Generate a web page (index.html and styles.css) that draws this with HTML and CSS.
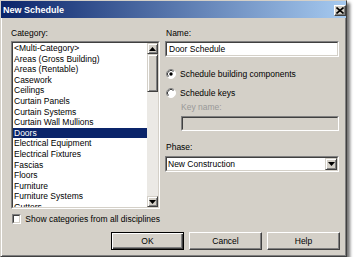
FILE: index.html
```html
<!DOCTYPE html>
<html>
<head>
<meta charset="utf-8">
<title>New Schedule</title>
<link rel="stylesheet" href="styles.css">
</head>
<body>
<div class="dialog">
  <div class="titlebar">
    <span class="title">New Schedule</span>
    <span class="close"><svg width="8" height="7" viewBox="0 0 8 7"><path d="M0.5,0.5 L7.5,6.5 M7.5,0.5 L0.5,6.5" stroke="#000" stroke-width="1.6" fill="none"/></svg></span>
  </div>
  <div class="body">
    <div class="col-left">
      <div class="label">Category:</div>
      <div class="sunken listbox">
        <div class="sunken-in listbox-in">
          <ul class="items">
            <li>&lt;Multi-Category&gt;</li>
            <li>Areas (Gross Building)</li>
            <li>Areas (Rentable)</li>
            <li>Casework</li>
            <li>Ceilings</li>
            <li>Curtain Panels</li>
            <li>Curtain Systems</li>
            <li>Curtain Wall Mullions</li>
            <li class="sel">Doors</li>
            <li>Electrical Equipment</li>
            <li>Electrical Fixtures</li>
            <li>Fascias</li>
            <li>Floors</li>
            <li>Furniture</li>
            <li>Furniture Systems</li>
            <li>Gutters</li>
            <li>Lighting Fixtures</li>
          </ul>
          <div class="scrollbar">
            <div class="raised sb-btn"><svg width="7" height="4" viewBox="0 0 7 4"><path d="M0,4 L3.5,0 L7,4 Z" fill="#000"/></svg></div>
            <div class="raised sb-thumb"></div>
            <div class="sb-track"></div>
            <div class="raised sb-btn"><svg width="7" height="4" viewBox="0 0 7 4"><path d="M0,0 L3.5,4 L7,0 Z" fill="#000"/></svg></div>
          </div>
        </div>
      </div>
      <div class="check-row">
        <span class="sunken checkbox"><span class="sunken-in checkbox-in"></span></span>
        <span>Show categories from all disciplines</span>
      </div>
    </div>
    <div class="col-right">
      <div class="label pad1">Name:</div>
      <div class="sunken textbox"><div class="sunken-in textbox-in">Door Schedule</div></div>
      <div class="radio-row row1">
        <svg class="radio" width="10" height="10" viewBox="0 0 10 10">
          <circle cx="5" cy="5" r="4.5" fill="#fff"/>
          <path d="M1.8,8.2 A4.5,4.5 0 0 1 8.2,1.8" stroke="#808080" fill="none"/>
          <path d="M8.2,1.8 A4.5,4.5 0 0 1 1.8,8.2" stroke="#ffffff" fill="none"/>
          <path d="M2.5,7.5 A3.5,3.5 0 0 1 7.5,2.5" stroke="#404040" fill="none"/>
          <circle cx="5" cy="5" r="1.7" fill="#000"/>
        </svg>
        <span>Schedule building components</span>
      </div>
      <div class="radio-row row2">
        <svg class="radio" width="10" height="10" viewBox="0 0 10 10">
          <circle cx="5" cy="5" r="4.5" fill="#fff"/>
          <path d="M1.8,8.2 A4.5,4.5 0 0 1 8.2,1.8" stroke="#808080" fill="none"/>
          <path d="M8.2,1.8 A4.5,4.5 0 0 1 1.8,8.2" stroke="#ffffff" fill="none"/>
          <path d="M2.5,7.5 A3.5,3.5 0 0 1 7.5,2.5" stroke="#404040" fill="none"/>
        </svg>
        <span>Schedule keys</span>
      </div>
      <div class="label disabled keylabel">Key name:</div>
      <div class="sunken keybox"><div class="sunken-in keybox-in"></div></div>
      <div class="label pad1 phaselabel">Phase:</div>
      <div class="sunken dropdown">
        <div class="sunken-in dropdown-in">
          <span class="dd-text">New Construction</span>
          <span class="raised dd-btn"><svg width="7" height="4" viewBox="0 0 7 4"><path d="M0,0 L3.5,4 L7,0 Z" fill="#000"/></svg></span>
        </div>
      </div>
    </div>
  </div>
  <div class="buttons">
    <div class="btn default">OK</div>
    <div class="btn">Cancel</div>
    <div class="btn">Help</div>
  </div>
</div>
</body>
</html>
```
FILE: styles.css
```css
* { box-sizing: border-box; }
html, body { margin: 0; padding: 0; background: #fff; }
body {
  font-family: "Liberation Sans", Arial, sans-serif;
  font-size: 8.5px;
  color: #000;
}
.dialog {
  width: 347px;
  height: 257px;
  background: #d4d0c8;
  border: 1px solid;
  border-color: #d4d0c8 #404040 #404040 #d4d0c8;
  box-shadow: inset 1px 1px #fff, inset -1px -1px #808080, 3px 3px 3px rgba(0,0,0,0.55);
  display: flex;
  flex-direction: column;
}
.titlebar {
  height: 17px;
  background: linear-gradient(to right, #0a246a, #a6caf0);
  display: flex;
  align-items: center;
  justify-content: space-between;
  padding: 0 0 0 2px;
  color: #fff;
  font-weight: bold;
  font-size: 9px;
}
.close {
  width: 12px;
  height: 11px;
  margin-top: 1px;
  background: #d4d0c8;
  border: 1px solid;
  border-color: #fff #404040 #404040 #fff;
  box-shadow: inset -1px -1px #808080;
  display: flex;
  align-items: center;
  justify-content: center;
}
.close svg { display: block; }

.sunken { border: 1px solid; border-color: #808080 #fff #fff #808080; }
.sunken-in { border: 1px solid; border-color: #404040 #d4d0c8 #d4d0c8 #404040; height: 100%; }
.raised {
  background: #d4d0c8;
  border: 1px solid;
  border-color: #d4d0c8 #404040 #404040 #d4d0c8;
  box-shadow: inset 1px 1px #fff, inset -1px -1px #808080;
}

.body {
  display: flex;
  gap: 5px;
  padding: 10px 0 0 10px;
}
.col-left { width: 149px; }
.col-right { width: 174px; }
.label { height: 11px; line-height: 11px; white-space: nowrap; }
.pad1 { padding-left: 1px; }

.listbox { margin-top: 2px; height: 168px; }
.listbox-in { display: flex; background: #fff; }
.items {
  flex: 1;
  list-style: none;
  margin: 0;
  padding: 0;
  overflow: hidden;
}
.items li {
  height: 10.6px;
  line-height: 10.6px;
  padding-left: 1px;
  white-space: nowrap;
}
.items li.sel { background: #0a246a; color: #fff; }
.scrollbar {
  width: 11px;
  display: flex;
  flex-direction: column;
}
.sb-btn {
  height: 11px;
  display: flex;
  align-items: center;
  justify-content: center;
}
.sb-btn svg { display: block; }
.sb-thumb { height: 38px; }
.sb-track { flex: 1; background: #ebe9e5; }

.check-row {
  margin-top: 4px;
  height: 12px;
  display: flex;
  align-items: center;
  gap: 4px;
  padding-left: 1px;
  white-space: nowrap;
}
.checkbox { width: 10px; height: 10px; display: block; }
.checkbox-in { display: block; background: #fff; }

.textbox { margin-top: 2px; height: 16px; }
.textbox-in { background: #fff; padding-left: 2px; line-height: 12px; }

.radio-row {
  height: 11px;
  display: flex;
  align-items: center;
  gap: 4px;
  padding-left: 1px;
  white-space: nowrap;
}
.radio { display: block; flex: none; }
.row1 { margin-top: 11px; }
.row2 { margin-top: 8px; }
.disabled { color: #999; }
.keylabel { margin-top: 4px; padding-left: 16px; }
.keybox { margin-top: 3px; margin-left: 16px; height: 15px; }
.keybox-in { background: #d4d0c8; }
.phaselabel { margin-top: 11px; }
.dropdown { margin-top: 3px; height: 16px; }
.dropdown-in {
  background: #fff;
  display: flex;
  align-items: stretch;
}
.dd-text { flex: 1; padding-left: 1px; line-height: 12px; }
.dd-btn {
  width: 12px;
  display: flex;
  align-items: center;
  justify-content: center;
}
.dd-btn svg { display: block; }

.buttons {
  margin-top: 7px;
  display: flex;
  justify-content: flex-end;
  gap: 5px;
  padding-right: 6px;
}
.btn {
  width: 73px;
  height: 18px;
  line-height: 16px;
  text-align: center;
  background: #d4d0c8;
  border: 1px solid;
  border-color: #fff #404040 #404040 #fff;
  box-shadow: inset -1px -1px #808080;
}
.btn.default {
  border-color: #000;
  box-shadow: inset 1px 1px #fff, inset -1px -1px #404040, inset -2px -2px #808080;
}
```
